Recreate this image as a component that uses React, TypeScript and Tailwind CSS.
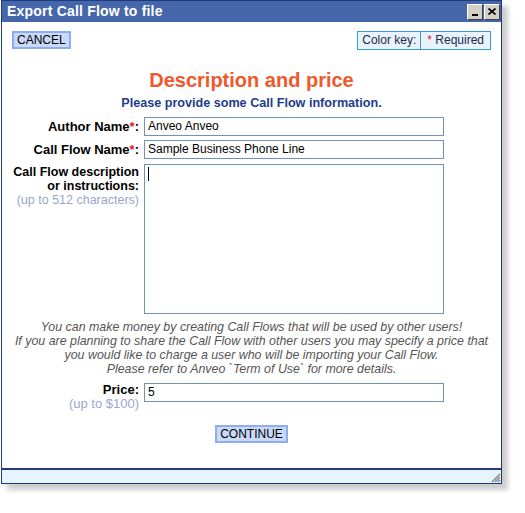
const font = "font-['Liberation_Sans',Arial,sans-serif]";

function Field({ value }: { value: string }) {
  return (
    <div className="h-[19px] w-[300px] border border-[#6f93b5] bg-white px-[3px] text-[12px] leading-[17px] text-black">
      {value}
    </div>
  );
}

export default function App() {
  return (
    <div className={`relative h-[513px] w-[525px] bg-white ${font}`}>
      <div className="ml-[1px] flex h-[484px] w-[501px] flex-col border border-[#1e3c7c] bg-white shadow-[6px_6px_5px_rgba(0,0,0,0.2)]">
        {/* Title bar */}
        <div className="flex h-[21px] items-center justify-between bg-[#4666ab] pl-[5px] pr-[1px]">
          <span className="text-[14px] font-bold tracking-[0.2px] text-white">Export Call Flow to file</span>
          <div className="flex gap-[1px]">
            <div className="flex h-[16px] w-[16px] items-end justify-center border border-t-white border-l-white border-r-[#404040] border-b-[#404040] bg-[#d4d0c8] pb-[3px]">
              <div className="h-[2px] w-[6px] bg-black" />
            </div>
            <div className="flex h-[16px] w-[16px] items-center justify-center border border-t-white border-l-white border-r-[#404040] border-b-[#404040] bg-[#d4d0c8]">
              <svg width="8" height="7" viewBox="0 0 8 7">
                <path d="M0.5 0.5L7.5 6.5M7.5 0.5L0.5 6.5" stroke="black" strokeWidth="1.6" />
              </svg>
            </div>
          </div>
        </div>

        {/* Body */}
        <div className="flex flex-1 flex-col">
          <div className="mt-[9px] flex items-start justify-between pl-[10px] pr-[10px]">
            <button className="h-[18px] border-2 border-[#8caef0] bg-[#c9d9f7] px-[3px] text-[12px] leading-[14px] text-black">
              CANCEL
            </button>
            <div className="flex h-[19px] border border-[#3a9ad0] bg-[#e8f3fc] text-[12px] leading-[17px] text-[#1a2a4a]">
              <span className="border-r border-[#3a9ad0] px-[4px]">Color key:</span>
              <span className="px-[6px]">
                <span className="text-[#e8141c]">*</span> Required
              </span>
            </div>
          </div>

          <h1 className="mt-[20px] text-center text-[20px] font-bold leading-[21px] text-[#f0582a]">Description and price</h1>
          <p className="mt-[5px] text-center text-[12.6px] font-bold leading-[15px] text-[#1d3c8c]">
            Please provide some Call Flow information.
          </p>

          <div className="mt-[6px] grid grid-cols-[137px_auto] gap-x-[5px] gap-y-[4px]">
            <label className="text-right text-[13px] font-bold leading-[19px] text-black">
              Author Name<span className="text-[#e8141c]">*</span>:
            </label>
            <Field value="Anveo Anveo" />
            <label className="text-right text-[13px] font-bold leading-[19px] text-black">
              Call Flow Name<span className="text-[#e8141c]">*</span>:
            </label>
            <Field value="Sample Business Phone Line" />
            <div className="mt-[2px] text-right text-[12.5px] leading-[14px]">
              <div className="font-bold text-black">Call Flow description</div>
              <div className="font-bold text-black">or instructions:</div>
              <div className="text-[#9aa6d0]">(up to 512 characters)</div>
            </div>
            <div className="mt-[1px] h-[150px] w-[300px] border border-[#6f93b5] bg-white px-[3px] pt-[2px]">
              <div className="h-[14px] w-[1px] bg-black" />
            </div>
          </div>

          <p className="mt-[6px] text-center text-[12.4px] italic leading-[14px] text-[#555]">
            You can make money by creating Call Flows that will be used by other users!
            <br />
            If you are planning to share the Call Flow with other users you may specify a price that
            <br />
            you would like to charge a user who will be importing your Call Flow.
            <br />
            Please refer to Anveo `Term of Use` for more details.
          </p>

          <div className="mt-[7px] grid grid-cols-[137px_auto] gap-x-[5px]">
            <div className="text-right text-[13px] leading-[14px]">
              <div className="font-bold text-black">Price:</div>
              <div className="text-[#9aa6d0]">(up to $100)</div>
            </div>
            <Field value="5" />
          </div>

          <div className="mt-[14px] flex justify-center">
            <button className="h-[18px] border-2 border-[#8caef0] bg-[#c9d9f7] px-[3px] text-[12px] leading-[14px] text-black">
              CONTINUE
            </button>
          </div>
        </div>

        {/* Status bar */}
        <div className="relative h-[15px] border-t-2 border-[#1e3c7c] bg-[#e8f4fd]">
          <svg className="absolute bottom-0 right-0" width="11" height="11" viewBox="0 0 11 11">
            <path d="M10 2L2 10M10 5L5 10M10 8L8 10" stroke="#888" strokeWidth="1.5" />
          </svg>
        </div>
      </div>
    </div>
  );
}
